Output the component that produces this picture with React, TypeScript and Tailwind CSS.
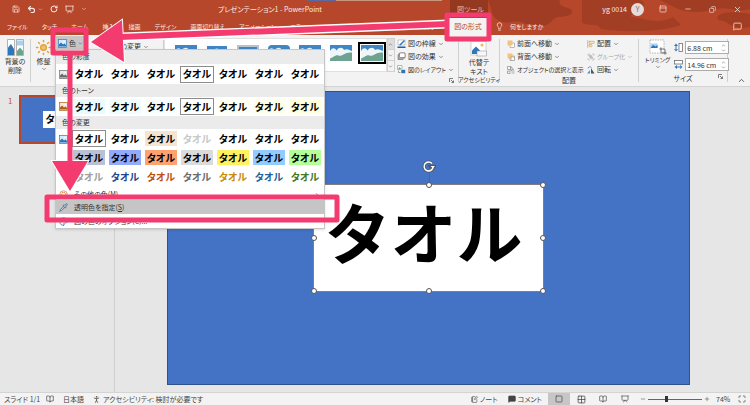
import React, {useState} from 'react';
import {
	Save, Undo2, RotateCw, Minus, Plus, X, Copy, ChevronDown, ChevronUp, MessageSquare,
	Lightbulb, Crop, Square, Grid2x2, BookOpen, Presentation, Maximize, NotebookPen, PersonStanding,
	ChevronRight, PanelTop, Pipette, Palette, Group, AlignStartVertical, Sun,
} from 'lucide-react';

const tabs = ['ファイル', 'タッチ', 'ホーム', '挿入', '描画', 'デザイン', '画面切り替え', 'アニメーション', 'スライドショー', '校閲', '表示', '録画', 'ヘルプ'];

const toneColors = ['bg-[#e9fbff]', 'bg-[#f0fdff]', 'bg-[#f7feff]', 'bg-white', 'bg-[#fffff2]', 'bg-[#ffffe8]', 'bg-[#ffffdc]'];

const recolors = [
	['bg-white text-black', 'bg-white text-black', 'bg-[#f5e4cf] text-black', 'bg-white text-[#c8c8c8]', 'bg-white text-black', 'bg-white text-black', 'bg-white text-black'],
	['bg-[#b8c1d6] text-black', 'bg-[#93aaf8] text-black', 'bg-[#ffa270] text-black', 'bg-[#dbdbdb] text-black', 'bg-[#fff160] text-black', 'bg-[#92cbff] text-black', 'bg-[#b4ff97] text-black'],
	['bg-white text-[#a0a0a0]', 'bg-white text-[#1f4690]', 'bg-white text-[#bd510d]', 'bg-white text-[#6b6b6b]', 'bg-white text-[#c98b04]', 'bg-white text-[#235f98]', 'bg-white text-[#44761c]'],
];

interface SwatchRowProps {
	colors: string[],
	selected?: number,
}

const SwatchRow: React.FC<SwatchRowProps> = ({colors, selected}) => (
	<div className="grid grid-cols-7 flex-1 pr-px">
		{colors.map((color, i) => (
			<button
				key={i}
				type="button"
				className={`m-px h-[17px] border text-[10px] leading-[14px] font-bold whitespace-nowrap ${color} ${selected === i ? 'border-[#8c8c8c]' : 'border-white'}`}
			>
				タオル
			</button>
		))}
	</div>
);

const PictureIcon: React.FC<{className?: string}> = ({className = 'w-[9px] h-[9px]'}) => (
	<svg className={className} viewBox="0 0 18 18" preserveAspectRatio="none">
		<rect x="1" y="1" width="16" height="16" fill="#d9ebfa" stroke="#3b7fc1" strokeWidth="1.5" />
		<path d="M2 15V11l4-4 4 4 3-2 3 3v3z" fill="#2b75b8" />
		<circle cx="12" cy="5" r="1.5" fill="#fff" />
	</svg>
);

const ColorMenu: React.FC = () => (
	<div className="absolute -left-px top-[13px] z-20 w-[270px] bg-white border border-[#c6c6c6] text-[#333] shadow-sm">
		<h3 className="h-[14px] bg-[#ebebeb] pl-1.5 leading-[13px]">色の彩度</h3>
		<div className="flex h-[20px] items-center">
			<PictureIcon className="w-[9px] h-[9px] mx-[3px] grayscale" />
			<SwatchRow colors={Array(7).fill('bg-white text-black')} selected={3} />
		</div>
		<h3 className="h-[13px] bg-[#ebebeb] pl-1.5 leading-[13px]">色のトーン</h3>
		<div className="flex h-[19px] items-center">
			<PictureIcon className="w-[9px] h-[9px] mx-[3px] hue-rotate-180" />
			<SwatchRow colors={toneColors.map((color) => `${color} text-black`)} selected={3} />
		</div>
		<h3 className="h-[13px] bg-[#ebebeb] pl-1.5 leading-[13px]">色の変更</h3>
		<div className="flex">
			<PictureIcon className="w-[9px] h-[9px] mx-[3px] mt-1.5" />
			<div className="flex-1">
				{recolors.map((colors, i) => <SwatchRow key={i} colors={colors} selected={i === 0 ? 0 : undefined} />)}
			</div>
		</div>
		<div className="flex flex-col pt-[3px]">
			<button type="button" className="flex h-[11px] items-center pl-[3px] gap-1.5">
				<Palette size={9} className="text-[#d28135]" />
				その他の色(M)
				<ChevronRight size={6} className="ml-auto mr-1" />
			</button>
			<button type="button" className="flex h-[14px] items-center pl-[3px] gap-1.5 bg-[#c5c5c5]">
				<Pipette size={9} className="text-[#2b6cab]" />
				<span>透明色を指定(<u>S</u>)</span>
			</button>
			<button type="button" className="flex h-[14px] items-center pl-[3px] gap-1.5">
				<Palette size={9} className="text-[#2b6cab]" />
				図の色のオプション(C)...
			</button>
		</div>
	</div>
);

interface CommandProps {
	icon: React.ReactNode,
	label: string,
	arrow?: boolean,
	disabled?: boolean,
}

const Command: React.FC<CommandProps> = ({icon, label, arrow = true, disabled}) => (
	<button type="button" disabled={disabled} className="flex h-[13px] items-center gap-0.5 whitespace-nowrap disabled:text-[#a5a5a5]">
		{icon}
		{label}
		{arrow && <ChevronDown size={6} />}
	</button>
);

const Launcher: React.FC = () => (
	<button type="button" aria-label="詳細" className="absolute right-1 bottom-[3px]">
		<svg className="w-[5px] h-[5px]" viewBox="0 0 10 10" fill="none" stroke="#555" strokeWidth="1.5"><path d="M1 8V1h7M4 4l5 5M9 5v4H5" /></svg>
	</button>
);

const LayersIcon: React.FC<{back?: boolean}> = ({back}) => (
	<svg className="w-[8px] h-[8px]" viewBox="0 0 16 16">
		<rect x="6" y="6" width="9" height="9" fill="#fff" stroke="#777" />
		<rect x="1" y="1" width="10" height="10" fill="#f3c27e" />
		{back && <rect x="8" y="8" width="7" height="7" fill="#fff" stroke="#777" />}
	</svg>
);

const SizeIcon: React.FC<{wide?: boolean}> = ({wide}) => (
	<svg className={wide ? 'w-[9px] h-[9px]' : 'w-[9px] h-[9px] rotate-90'} viewBox="0 0 18 18">
		<rect x="1" y="1" width="16" height="7" fill="#fff" stroke="#666" strokeWidth="1.5" />
		<path d="M1 14l5-4v8zM17 14l-5-4v8zM5 13h8v2H5z" fill="#2c76bb" />
	</svg>
);

const SizeField: React.FC<{label: string, initial: string, wide?: boolean}> = ({label, initial, wide}) => {
	const [value, setValue] = useState(initial);
	return (
		<label className="flex items-center gap-0.5">
			<SizeIcon wide={wide} />
			<span className="flex h-[13px] w-[44px] items-center border border-[#ababab] bg-white">
				<input
					aria-label={label}
					className="w-[35px] pl-px text-[7px] leading-[10px] outline-none"
					value={value}
					onChange={(e) => setValue(e.target.value)}
				/>
				<span className="flex flex-col">
					<ChevronUp size={5} />
					<ChevronDown size={5} />
				</span>
			</span>
		</label>
	);
};

const StyleThumb: React.FC<{frame: string}> = ({frame}) => (
	<svg className={`w-[22px] h-[16px] shrink-0 box-border ${frame}`} viewBox="0 0 44 32" preserveAspectRatio="none">
		<rect width="44" height="32" fill="#3f86c6" />
		<path d="M0 12c5-8 10-6 13-1 6-9 14-5 15-1 6-4 11 0 16 2v20H0z" fill="#eef6fa" />
		<path d="M0 27c8-2 10-8 17-6 8 3 12-8 27-6v17H0z" fill="#6ea391" />
	</svg>
);

const thumbFrames = ['', 'border border-white', 'border-2 border-[#b9c2cb]', 'rounded-sm', '', '', 'outline-2 outline-black outline-offset-1'];

const Header: React.FC = () => (
	<header className="relative h-[35px] bg-[#b7472a] text-[#fbe9e4]">
		<svg className="absolute right-0 top-0 h-[35px] w-[450px]" viewBox="0 0 450 35">
			<path d="M8 0h28v1H8z" fill="#5d67a0" />
			<path d="M36 0h106v1H36z" fill="#c9957f" />
			<path d="M188 0h72c-4 9 14 6 12 13-4 6-16 1-20 8-6 7-20 7-28 2-9-4-16 2-24-2-10-4-8-13-12-21z" fill="#a03c23" />
			<path d="M282 0h58c8 3 2 10-4 12-8 4-8 11-18 12-12 3-25 2-36-1zM295 22c10-6 28-8 44-4s24 4 34-1l8 8c-24 8-60 7-80 4z" fill="#a23e24" />
			<path d="M360 0h90v9c-15 4-22-3-34 0-16 5-34 3-42-2zM418 16c6-5 20-4 32-2v13c-10 3-19-1-24-5-4-2-11-1-8-6z" fill="#a13d23" />
			<path d="M150 0h38v18h-38z" fill="#943820" />
		</svg>
		<div className="relative flex h-[18px] items-center">
			<div className="flex flex-1 items-center gap-[7px] pl-3">
				<button type="button" aria-label="保存"><Save size={8} /></button>
				<button type="button" aria-label="元に戻す" className="flex items-center gap-0.5"><Undo2 size={9} strokeWidth={3} /><ChevronDown size={5} /></button>
				<button type="button" aria-label="繰り返し"><RotateCw size={8} strokeWidth={3} /></button>
				<button type="button" aria-label="スライドショー"><Presentation size={9} /></button>
				<button type="button" aria-label="カスタマイズ"><ChevronDown size={6} /></button>
			</div>
			<h1 className="pr-[122px] text-[7px]">プレゼンテーション1 - PowerPoint</h1>
			<div className="flex w-[306px] items-center">
				<span className="w-[50px] pl-[13px] text-[#eebdae]">図ツール</span>
				<span className="ml-auto pr-1 text-[7px]">yg 0014</span>
				<span className="mr-[15px] h-[13px] w-[13px] rounded-full bg-[#e5dcda] text-center leading-[13px] text-[#8f6a60]">Y</span>
				<div className="flex items-center gap-[17px] pr-2">
					<button type="button" aria-label="リボンの表示"><PanelTop size={8} /></button>
					<button type="button" aria-label="最小化"><Minus size={8} /></button>
					<button type="button" aria-label="元のサイズ"><Copy size={7} className="-scale-x-100" /></button>
					<button type="button" aria-label="閉じる"><X size={9} /></button>
				</div>
			</div>
		</div>
		<nav className="relative flex h-[17px] items-center text-[6px] whitespace-nowrap">
			<div className="flex w-[449px] items-center gap-[14px] overflow-hidden pl-[7px]">
				{tabs.map((tab) => <button key={tab} type="button">{tab}</button>)}
			</div>
			<button type="button" className="h-[17px] w-[38px] bg-[#f3f3f3] text-[7px] text-[#b7472a]">図の形式</button>
			<button type="button" className="ml-2 flex items-center gap-1.5"><Lightbulb size={9} />何をしますか</button>
			<button type="button" aria-label="コメント" className="ml-auto pr-2"><MessageSquare size={9} /></button>
		</nav>
	</header>
);

const Ribbon: React.FC = () => (
	<section className="flex h-[52px] border-b border-[#d2d2d2] bg-[#f3f3f3] text-[7px] leading-[9px]">
		<button type="button" className="my-1 flex w-[31px] flex-col items-center border-r border-[#d0d0d0]">
			<svg className="mb-px h-[17px] w-[17px] shrink-0" viewBox="0 0 34 34">
				<path d="M1 1h14v32H1zM19 1h14v32H19z" fill="#fff" stroke="#999" strokeWidth="1.5" />
				<path d="M2 17l6-7 6 10v12H2z" fill="#2c76bb" />
				<path d="M20 24l6-7 6 7v8H20z" fill="#67a58c" />
				<path d="M20 3h12v10H20z" fill="#a9d1f0" />
			</svg>
			背景の<br />削除
		</button>
		<button type="button" className="my-1 flex w-[25px] flex-col items-center">
			<Sun size={17} className="mb-px shrink-0 fill-[#f3c163] text-[#dfa33c]" />
			修整
			<ChevronDown size={6} />
		</button>
		<div className="relative mt-px h-[14px] w-[28px] bg-[#c6c6c6]">
			<button type="button" className="flex h-[14px] items-center gap-0.5 pl-0.5"><PictureIcon />色<ChevronDown size={5} /></button>
			<ColorMenu />
		</div>
		<div className="my-1 flex w-[80px] justify-end border-r border-[#d0d0d0] pr-3.5 pt-px">
			<Command icon={<PictureIcon />} label="図の変更" />
		</div>
		<div className="mt-[3px] flex h-[34px] w-[223px] items-start gap-[9px] overflow-hidden border border-[#e0e0e0] bg-white pl-2.5 pt-1.5">
			{thumbFrames.map((frame, i) => <StyleThumb key={i} frame={frame} />)}
		</div>
		<div className="mt-[3px] flex h-[34px] w-[8px] flex-col divide-y divide-[#d0d0d0] border border-[#d0d0d0]">
			<button type="button" aria-label="上へ" className="flex-1 bg-[#dcdcdc]"><ChevronUp size={5} /></button>
			<button type="button" aria-label="下へ" className="flex-1"><ChevronDown size={5} /></button>
			<button type="button" aria-label="その他" className="flex-1"><ChevronDown size={5} /></button>
		</div>
		<div className="relative w-[63px] pl-0.5 pt-0.5">
			<Command
				icon={<svg className="h-[9px] w-[9px]" viewBox="0 0 18 18"><path d="M2 2h14v10H2z" fill="#fff" stroke="#999" /><path d="M4 12L14 2l2 2L7 13z" fill="#2c76bb" /><path d="M1 15h16v3H1z" fill="#1f5fa6" /></svg>}
				label="図の枠線"
			/>
			<Command
				icon={<svg className="h-[9px] w-[9px]" viewBox="0 0 18 18"><path d="M5 2h11v9l-4 4H2V6z" fill="#aaa" stroke="#555" /><rect x="5" y="2" width="11" height="9" rx="2" fill="#fff" stroke="#555" /></svg>}
				label="図の効果"
			/>
			<div className="text-[6px]">
				<Command
					icon={<svg className="h-[9px] w-[9px]" viewBox="0 0 18 18"><path d="M1 1h9v8H1z" fill="#fff" stroke="#777" /><path d="M2 8l3-4 4 4z" fill="#67a58c" /><path d="M8 9h9v8H8z" fill="#2c76bb" stroke="#fff" /><path d="M3 11v4h4" fill="none" stroke="#555" /></svg>}
					label="図のレイアウト"
				/>
			</div>
			<Launcher />
		</div>
		<div className="my-1 flex w-[42px] flex-col items-center border-x border-[#d0d0d0] pt-0.5">
			<button type="button" className="flex flex-col items-center">
				<svg className="h-[17px] w-[17px]" viewBox="0 0 34 34">
					<rect x="2" y="1" width="30" height="27" fill="#fff" stroke="#aaa" />
					<path d="M4 26v-7l8-8 8 8v7z" fill="#2c76bb" />
					<circle cx="24" cy="8" r="3" fill="#f0b94d" />
					<rect x="14" y="20" width="19" height="10" fill="#f8f8f8" stroke="#888" />
				</svg>
				代替テ<br />キスト
			</button>
			<span className="mt-auto text-[6px] leading-[8px] whitespace-nowrap">アクセシビリティ</span>
		</div>
		<div className="my-px flex w-[138px] flex-col">
			<div className="flex pl-[7px] pt-px">
				<div className="w-[80px]">
					<Command icon={<LayersIcon />} label="前面へ移動" />
					<Command icon={<LayersIcon back />} label="背面へ移動" />
					<div className="text-[6px]">
						<Command
							icon={<svg className="h-[8px] w-[8px]" viewBox="0 0 16 16" fill="none" stroke="#666"><path d="M1 1h6v6H1zM1 10h5v5H1zM9 10h6M9 14h6" /><path d="M8 1l5 6-3 0-2 3z" fill="#fff" /></svg>}
							label="オブジェクトの選択と表示"
							arrow={false}
						/>
					</div>
				</div>
				<div>
					<Command icon={<AlignStartVertical size={8} className="text-[#d9953a]" />} label="配置" />
					<div className="text-[6px]"><Command icon={<Group size={8} />} label="グループ化" disabled /></div>
					<Command icon={<svg className="h-[8px] w-[8px]" viewBox="0 0 16 16"><path d="M8 4l7 11H8z" fill="#555" /><path d="M6 8v7H0z" fill="#4b97d6" /><path d="M2 5c1-4 5-4 7-2" fill="none" stroke="#2c76bb" strokeWidth="1.5" /></svg>} label="回転" />
				</div>
			</div>
			<span className="mt-auto pb-px text-center">配置</span>
		</div>
		<div className="relative my-1 flex w-[90px] flex-col border-x border-[#d0d0d0]">
			<div className="flex gap-1 pl-1.5">
				<button type="button" className="flex flex-col items-center text-[6px] whitespace-nowrap">
					<span className="relative">
						<svg className="h-[16px] w-[17px]" viewBox="0 0 34 32"><path d="M2 2h28v26H2z" fill="#fff" stroke="#777" strokeDasharray="3 2" /><path d="M3 18V9h14v9z" fill="#a9d1f0" /><path d="M3 18l5-6 5 3 4-3v6z" fill="#2c76bb" /></svg>
						<Crop size={8} className="absolute -right-px bottom-0" />
					</span>
					トリミング
					<ChevronDown size={6} />
				</button>
				<div className="flex flex-col gap-1 pt-0.5">
					<SizeField label="高さ" initial="6.88 cm" />
					<SizeField label="幅" initial="14.96 cm" wide />
				</div>
			</div>
			<span className="mt-auto text-center leading-[8px]">サイズ</span>
			<Launcher />
		</div>
		<button type="button" aria-label="リボンを折りたたむ" className="ml-auto self-end pr-1 pb-px"><ChevronUp size={9} /></button>
	</section>
);

const handles = [
	'-left-[3px] -top-[3px]', 'left-1/2 -top-[3px] -translate-x-1/2', '-right-[3px] -top-[3px]',
	'-left-[3px] top-1/2 -translate-y-1/2', '-right-[3px] top-1/2 -translate-y-1/2',
	'-left-[3px] -bottom-[3px]', 'left-1/2 -bottom-[3px] -translate-x-1/2', '-right-[3px] -bottom-[3px]',
];

const Workspace: React.FC = () => (
	<main className="flex flex-1 bg-[#e6e6e6]">
		<aside className="flex w-[115px] items-start gap-[7px] border-r border-[#cfcfcf] pl-2 pt-2">
			<span className="pt-px text-[8px] leading-[9px] text-[#c8532f]">1</span>
			<button type="button" aria-label="スライド 1" className="flex h-[49px] w-[86px] items-center justify-center border-2 border-[#b7472a] bg-[#4472c4]">
				<span className="h-[17px] w-[38px] bg-white pl-0.5 text-left text-[10px] leading-[15px] font-bold text-black">タオル</span>
			</button>
		</aside>
		<div className="flex flex-1 items-start justify-center pt-1 pr-2">
			<div className="flex aspect-video w-5/6 items-center justify-center border border-[#2f528f] bg-[#4472c4]">
				<div className="relative flex h-[108px] w-[231px] items-center justify-center border border-[#7f7f7f] bg-white pr-2.5 pb-4">
					<span className="text-[66px] leading-[66px] font-bold whitespace-nowrap text-black [font-feature-settings:normal]">タオル</span>
					<span className="absolute -top-[14px] left-1/2 h-[14px] w-px bg-[#55637c]" />
					<svg className="absolute -top-[25px] left-1/2 h-[14px] w-[14px] -translate-x-1/2" viewBox="0 0 28 28" fill="none">
						<path d="M22 15a9 9 0 1 1-2-8M17 13h8l-4 5z" stroke="#555" strokeWidth="6" />
						<path d="M22 15a9 9 0 1 1-2-8" stroke="#fff" strokeWidth="3" />
						<path d="M17 12h9l-4 5z" fill="#fff" />
					</svg>
					{handles.map((place) => <span key={place} className={`absolute h-[6px] w-[6px] rounded-full border border-[#555] bg-white ${place}`} />)}
				</div>
			</div>
		</div>
	</main>
);

const StatusBar: React.FC = () => {
	const [zoom, setZoom] = useState(74);
	return (
		<footer className="flex h-[13px] items-center border-t border-[#d4d4d4] bg-[#f3f3f3] pl-1 text-[7px] whitespace-nowrap text-[#444]">
			<span className="w-[42px]">スライド 1/1</span>
			<BookOpen size={8} className="mr-[9px]" />
			<span className="w-[29px]">日本語</span>
			<button type="button" className="flex items-center gap-0.5"><PersonStanding size={9} />アクセシビリティ: 検討が必要です</button>
			<button type="button" className="ml-auto mr-2.5 flex items-center gap-0.5"><NotebookPen size={7} />ノート</button>
			<button type="button" className="mr-1.5 flex items-center gap-0.5"><MessageSquare size={8} className="fill-[#444]" />コメント</button>
			<button type="button" aria-label="標準" className="flex h-3 w-[22px] items-center justify-center bg-[#c6c6c6]"><Square size={8} /></button>
			<button type="button" aria-label="一覧" className="flex w-[22px] justify-center"><Grid2x2 size={9} /></button>
			<button type="button" aria-label="閲覧表示" className="flex w-[22px] justify-center"><BookOpen size={8} /></button>
			<button type="button" aria-label="スライドショー" className="mr-1 flex w-[22px] justify-center"><Presentation size={8} /></button>
			<Minus size={6} />
			<input
				type="range"
				aria-label="ズーム"
				min="10"
				max="200"
				value={zoom}
				onChange={(e) => setZoom(Number(e.target.value))}
				className="mx-0.5 h-px w-[54px] appearance-none bg-[#666] [&::-webkit-slider-thumb]:h-[6px] [&::-webkit-slider-thumb]:w-[3px] [&::-webkit-slider-thumb]:appearance-none [&::-webkit-slider-thumb]:bg-[#333]"
			/>
			<Plus size={6} />
			<span className="w-[24px] pl-1.5">{zoom}%</span>
			<Maximize size={8} className="mx-1" />
		</footer>
	);
};

// Tutorial markup: where to click and in which order
const Callouts: React.FC = () => (
	<svg className="pointer-events-none absolute left-0 top-0 z-30 h-[405px] w-[750px]" viewBox="0 0 750 405" fill="none">
		<path d="M448 24L122 37" stroke="#fff" strokeWidth="9" />
		<path d="M91 42L122 20L124 62z" fill="#f43b70" stroke="#fff" strokeWidth="2" paintOrder="stroke" />
		<path d="M448 24L120 37" stroke="#f43b70" strokeWidth="6" />
		<path d="M70 191L52 161H88z" fill="#f43b70" stroke="#fff" strokeWidth="2" paintOrder="stroke" />
		<path d="M70 54V163" stroke="#f43b70" strokeWidth="5" />
		<g stroke="#f43b70" strokeLinejoin="round">
			<rect x="53" y="30" width="33" height="23" strokeWidth="5" />
			<rect x="447" y="15" width="42" height="24" strokeWidth="5" />
			<rect x="47" y="197" width="290" height="23" strokeWidth="5" />
		</g>
	</svg>
);

const App: React.FC = () => {
	return (
		<div className="relative flex min-h-screen flex-col overflow-hidden bg-[#e6e6e6] font-['Noto_Sans_CJK_JP',sans-serif] text-[7px] text-[#333] [font-feature-settings:'palt']">
			<Header />
			<Ribbon />
			<Workspace />
			<StatusBar />
			<Callouts />
		</div>
	);
};

export default App;
